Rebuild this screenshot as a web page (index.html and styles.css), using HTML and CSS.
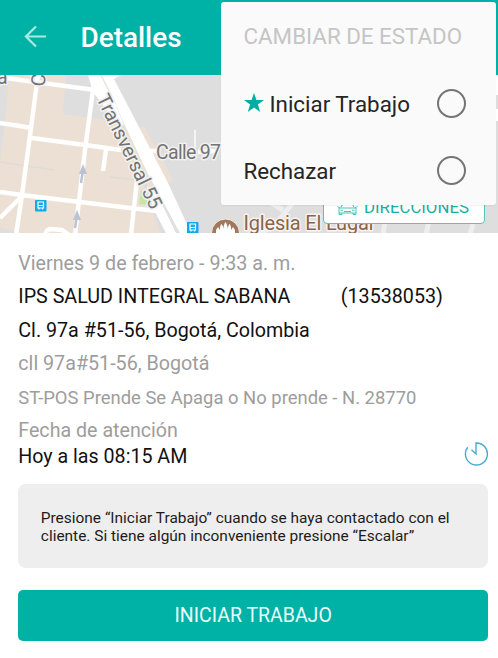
FILE: index.html
```html
<!DOCTYPE html>
<html lang="es">
<head>
<meta charset="utf-8">
<title>Detalles</title>
<link rel="stylesheet" href="styles.css">
</head>
<body>
<div class="screen">
  <header class="appbar">
    <svg class="back" viewBox="0 0 24 24"><path d="M23 12H2M12.500 1.500L2 12l10.500 10.500"/></svg>
    <h1 class="title">Detalles</h1>
  </header>

  <section class="map">
    <svg class="map-canvas" viewBox="0 75 498 158">
      <rect class="ground" x="0" y="75" width="498" height="158"/>
      <path class="block" d="M9 75H66L63 114 98 119 122 122 160 233H17L0 228V160L5 123Z"/>
      <path class="block" d="M137 129l7-3 29 54-7 3Z"/>
      <path class="ground" d="M0 125h2L0 160ZM0 228l16 3v4H0Z"/>
      <path class="park" d="M141 190l9 15-11-1Z"/>
      <g class="road thin">
        <path d="M110 177l25 3M0 162l54 8"/>
      </g>
      <g class="road">
        <path d="M-2 77L95 90M38 75L31 128 22 195 16 235M93 90L85 150 75 235M0 123l32 5M32 138l53 7 36 5M0 192l22 3 108 13 27 3M0 218l22-22M106 150l-3 21M137 180l-6 55M145 151h15M218 151l-20 1"/>
        <path d="M45 235q2-6 5-6l12 1 7 5"/>
        <path class="narrow" d="M195 130v18"/>
        <path class="lane" d="M292 204l-14 17-18 14M388 204l-5 30M429 222l-3 12M473 224l-3 10M270 202l13 8"/>
      </g>
      <path class="avenue" d="M88 75H107L112 88 126 125 118 125 93 92Z"/>
      <path class="block" d="M110 90L124 123 155 188 148 188Z"/>
      <path class="avenue" d="M106 75H121L114 79 140 129 168 183 192 235H181L147 172 121 117Z"/>
      <path class="avenue" d="M147 187l8 3 22 45H167L154 210Z"/>
      <path class="median" d="M101 75l11 22M154 187l25 48"/>
      <path class="avenue" d="M495 75h3v20h-3ZM495 109h3v12h-3Z"/>
      <g class="arrow"><path d="M81 183l2-13M75 228l2-13"/><path class="tip" d="M83 164l4 10h-8ZM77 210l4 10h-8Z"/></g>
      <g transform="translate(35 200)"><rect class="stop" width="11.500" height="11.500" rx="1"/><path class="bus" d="M3 2h5.500v6H3ZM3 5.500h5.500M4 8v1.500M7.500 8v1.500"/></g>
      <g transform="translate(187 222)"><rect class="stop" width="11.500" height="11.500" rx="1"/><path class="bus" d="M3 2h5.500v6H3ZM3 5.500h5.500M4 8v1.500M7.500 8v1.500"/></g>
      <circle class="poi" cx="225.500" cy="233" r="14"/>
      <path class="church" d="M216 235v-5l2-3 2 3V227q1-3 1.500-3t1.500 3v2l1-4q1-3 1.500-3t1.500 3l1 4v-2q1-3 1.500-3t1.500 3v3l2-3 2 3v5Z"/>
      <text class="label street" transform="translate(96 98) rotate(64)" textLength="125">Transversal 55</text>
      <text class="label street" x="156" y="158.500" textLength="65">Calle 97</text>
      <text class="label street" transform="translate(44.500 87) rotate(-84)">C</text>
      <text class="label street" x="-3" y="84">a</text>
      <text class="label place" x="243.500" y="229.500" textLength="132">Iglesia El Lugar</text>
    </svg>
    <button class="directions">
      <svg class="car" viewBox="0 0 21 12"><path d="M4 4.500L5.500 1h10L17 4.500M2 5h17v5H2ZM2 10v1.500h3V10M16 10v1.500h3V10M.5 3.500L3 5M20.500 3.500L18 5M7 8.500h7M3.500 7.300H6M15 7.300h2.500"/></svg>
      <span>DIRECCIONES</span>
    </button>
  </section>

  <main class="details">
    <p class="row muted">Viernes 9 de febrero - 9:33 a. m.</p>
    <p class="row client"><span class="name">IPS SALUD INTEGRAL SABANA</span><span>(13538053)</span></p>
    <p class="row">Cl. 97a #51-56, Bogotá, Colombia</p>
    <p class="row muted">cll 97a#51-56, Bogotá</p>
    <p class="row muted issue">ST-POS Prende Se Apaga o No prende - N. 28770</p>
    <div class="visit">
      <div>
        <p class="muted">Fecha de atención</p>
        <p>Hoy a las 08:15 AM</p>
      </div>
      <svg class="clock" viewBox="0 0 24 24"><path d="M3.700 5.300A11 11 0 1 0 12 1V12L7.500 7.800"/></svg>
    </div>
    <div class="hint">Presione “Iniciar Trabajo” cuando se haya contactado con el<br>cliente. Si tiene algún inconveniente presione “Escalar”</div>
    <button class="primary">INICIAR TRABAJO</button>
  </main>

  <aside class="menu">
    <div class="menu-title">CAMBIAR DE ESTADO</div>
    <div class="option">
      <svg class="star" viewBox="0 0 20 20"><path d="M10 0l2.400 7H20l-6.100 4.600L16.200 19 10 14.600 3.800 19l2.300-7.400L0 7h7.600Z"/></svg>
      <span>Iniciar Trabajo</span><i class="radio"></i>
    </div>
    <div class="option"><span>Rechazar</span><i class="radio"></i></div>
  </aside>
</div>
</body>
</html>
```
FILE: styles.css
```css
* { box-sizing: border-box; }
body { margin: 0; background: #fff; font-family: Roboto, "Liberation Sans", sans-serif; color: #111; }
p, h1 { margin: 0; font-weight: 400; }
button { font-family: inherit; cursor: pointer; }
.screen { position: relative; width: 498px; height: 658px; overflow: hidden; }

.appbar { height: 75px; display: flex; align-items: center; padding-left: 24px; background: #00b1a6; }
.back { width: 23px; height: 23px; margin-top: -2px; fill: none; stroke: #a9ebe2; stroke-width: 2.300; }
.title { margin-left: 33.500px; color: #fff; font-size: 27.900px; font-weight: 500; line-height: 32px; white-space: nowrap; }

.map { position: relative; height: 158px; overflow: hidden; }
.map-canvas { display: block; width: 498px; height: 158px; }
.ground { fill: #dedede; }
.block { fill: #ebe0d3; }
.park { fill: #c5e5a5; }
.road { fill: none; stroke: #fff; stroke-width: 4.500; }
.road.thin { stroke: #dfdcd6; stroke-width: 1.500; }
.road .narrow { stroke-width: 2; stroke: #f3f3f3; }
.road .lane { stroke: #eee; stroke-width: 5; }
.avenue { fill: #fff; }
.median { fill: none; stroke: #e4e2de; stroke-width: 1.200; }
.arrow { fill: none; stroke: #bcc1d3; stroke-width: 2.500; }
.arrow .tip { fill: #bcc1d3; stroke: none; }
.stop { fill: #12a9ec; }
.bus { fill: none; stroke: #fff; stroke-width: 1.200; }
.poi { fill: #a0785a; stroke: #f2eeeb; stroke-width: 1; }
.church { fill: #fff; }
.label { font-size: 19.500px; paint-order: stroke; stroke-width: 3px; stroke-linejoin: round; }
.street { fill: #737373; stroke: #f1f1f1; }
.place { font-size: 20px; fill: #8a6549; stroke: #f6f4f2; }
.directions { position: absolute; left: 323px; top: 115px; width: 162px; height: 34px; display: flex; align-items: center; padding: 0 0 0 13px; background: #fff; border: 1.500px solid #55c5bb; border-radius: 4px; color: #19aea3; font-size: 16.800px; white-space: nowrap; }
.car { width: 21px; height: 12px; margin: 3px 6px 0 0; fill: none; stroke: #4cc3b9; stroke-width: 1; }

.details { padding: 13.500px 10px 0 18.300px; }
.row { display: flex; align-items: center; height: 33.500px; font-size: 19.700px; white-space: nowrap; }
.issue { font-size: 18.430px; }
.muted { color: #9d9d9d; }
.name { width: 322.500px; }
.visit { display: flex; justify-content: space-between; height: 70px; padding-top: 3.500px; font-size: 19.650px; line-height: 26.500px; white-space: nowrap; }
.clock { width: 24px; height: 24px; margin-top: 24px; fill: none; stroke: #45abd3; stroke-width: 1.400; }
.hint { height: 84px; padding: 24.500px 22.500px; background: #eee; border-radius: 8px; font-size: 15.450px; line-height: 18.500px; white-space: nowrap; color: #1c1c1c; }
.primary { display: block; width: 100%; height: 51px; margin-top: 22px; background: #00b1a6; border: 0; border-radius: 5px; color: #e9fffb; font-size: 19.500px; }

.menu { position: absolute; left: 221px; top: 2px; width: 275px; height: 203px; padding: 1px 30px 0 22.500px; background: #fafafa; border-radius: 3px; box-shadow: 0 1px 2px rgba(0,0,0,.06); font-size: 22.350px; color: #252525; white-space: nowrap; }
.menu-title { height: 67px; line-height: 67px; color: #c5c5c5; }
.option { height: 67.300px; display: flex; align-items: center; }
.star { width: 20px; height: 20px; margin: -2px 6px 0 0; fill: #00ada1; }
.radio { width: 29px; height: 29px; margin-left: auto; border: 2.500px solid #757575; border-radius: 50%; }
```
